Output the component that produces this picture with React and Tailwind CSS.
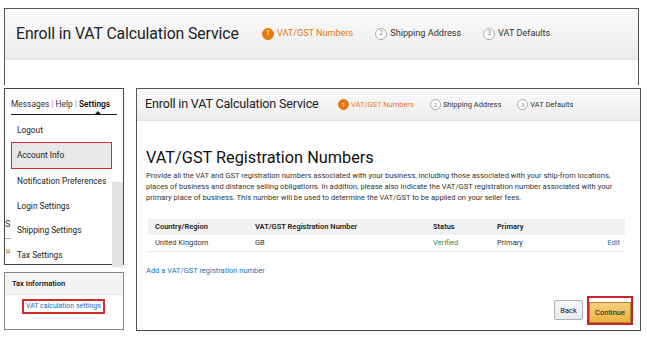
import React from 'react'

function Step({ n, label, active, size = 'lg' }) {
  const big = size === 'lg'
  return (
    <div className="flex items-center">
      <span
        className={
          (big ? 'w-[12px] h-[12px] text-[7px] mr-[3px] ' : 'w-[11px] h-[11px] text-[6px] mr-[2px] ') +
          (active
            ? 'bg-[#e47911] text-white border border-[#e47911] '
            : 'bg-white text-[#888] border border-[#aaa] ') +
          'rounded-full flex items-center justify-center leading-none'
        }
      >
        {n}
      </span>
      <span
        className={
          (big ? 'text-[9.1px] ' : 'text-[7.5px] ') +
          (active ? 'text-[#e47911] ' : 'text-[#333] ') +
          'whitespace-nowrap'
        }
      >
        {label}
      </span>
    </div>
  )
}

export default function App() {
  const sideItems = [
    'Logout',
    'Account Info',
    'Notification Preferences',
    'Login Settings',
    'Shipping Settings',
    'Tax Settings',
  ]

  return (
    <div className="w-[647px] h-[338px] bg-white overflow-hidden text-[#111]" style={{ fontFamily: 'Roboto, "Open Sans", sans-serif' }}>
      {/* Top banner */}
      <div className="mt-[8px] ml-[4px] w-[635px] h-[77px] border-x border-t border-[#555]">
        <div className="h-[51px] bg-gradient-to-b from-[#fbfbfb] to-[#ececec] border-b border-[#e2e2e2] flex items-center pl-[11px]">
          <h1 className="text-[15.8px] tracking-[-0.1px] text-[#222] w-[246px] whitespace-nowrap">Enroll in VAT Calculation Service</h1>
          <div className="flex items-center gap-[22px]">
            <Step n="1" label="VAT/GST Numbers" active />
            <Step n="2" label="Shipping Address" />
            <Step n="3" label="VAT Defaults" />
          </div>
        </div>
      </div>

      <div className="flex mt-[3px] ml-[4px]">
        {/* Left column */}
        <div className="w-[120px] flex flex-col">
          <div className="h-[177px] border border-[#444] relative flex flex-col">
            <div className="pt-[9px] px-[6px]">
              <div className="text-[8.4px] text-[#333] whitespace-nowrap">
                Messages <span className="text-[#999]">|</span> Help <span className="text-[#999]">|</span>{' '}
                <span className="font-semibold text-[#111]">Settings</span>
              </div>
              <div className="relative mt-[3px] h-[1px] bg-[#222]">
                <span className="absolute left-[84px] top-[-3px] w-0 h-0 border-x-[3px] border-x-transparent border-b-[3px] border-b-[#222]" />
              </div>
            </div>
            <div className="flex flex-1">
              <div className="w-[6px] relative">
                <span className="absolute left-[0px] top-[105px] text-[9px] text-[#333] leading-none">S</span>
                <span className="absolute left-[0px] top-[123px] w-[6px] h-[1px] bg-[#aaa]" />
                <span className="absolute left-[1px] top-[133px] text-[7px] text-[#555] leading-none">u</span>
              </div>
              <ul className="w-[101px] pt-[3px] flex flex-col text-[8.3px] text-[#222]">
                {sideItems.map((it) =>
                  it === 'Account Info' ? (
                    <li key={it} className="h-[27px] flex items-center pl-[5px] bg-[#e8e8e8] border border-[#d62b2b]">
                      {it}
                    </li>
                  ) : (
                    <li key={it} className="h-[24.5px] flex items-center pl-[6px] whitespace-nowrap">
                      {it}
                    </li>
                  )
                )}
              </ul>
              <div className="flex-1 flex flex-col">
                <div className="h-[67px]" />
                <div className="flex-1 bg-[#e3e3e3]" />
              </div>
            </div>
          </div>

          <div className="mt-[7px] h-[58px] border border-[#888] flex flex-col">
            <div className="h-[22px] bg-[#f3f3f3] border-b border-[#e2e2e2] flex items-center pl-[7px] text-[7.5px] font-semibold text-[#222]">
              Tax Information
            </div>
            <div className="flex-1 flex items-start pt-[4px] pl-[17px]">
              <span className="border-2 border-[#d62b2b] px-[2px] py-[2px] text-[7px] text-[#1a6fb5] leading-none whitespace-nowrap">
                VAT calculation settings
              </span>
            </div>
          </div>
        </div>

        {/* Main panel */}
        <div className="ml-[12px] w-[505px] h-[243px] border border-[#555] border-b-[#444] flex flex-col">
          <div className="h-[32px] bg-gradient-to-b from-[#fbfbfb] to-[#ececec] border-b border-[#e2e2e2] flex items-center pl-[8px]">
            <h2 className="text-[12.6px] tracking-[-0.2px] text-[#222] w-[193px] whitespace-nowrap">Enroll in VAT Calculation Service</h2>
            <div className="flex items-center gap-[16px]">
              <Step n="1" label="VAT/GST Numbers" active size="sm" />
              <Step n="2" label="Shipping Address" size="sm" />
              <Step n="3" label="VAT Defaults" size="sm" />
            </div>
          </div>

          <div className="px-[9px] pt-[26px] flex flex-col flex-1">
            <h3 className="text-[16.3px] leading-[21px] text-[#111] whitespace-nowrap">VAT/GST Registration Numbers</h3>
            <p className="mt-[2px] text-[7.6px] leading-[11px] text-[#333] whitespace-nowrap">
              Provide all the VAT and GST registration numbers associated with your business, including those associated with your ship-from locations,
              <br />
              places of business and distance selling obligations. In addition, please also indicate the VAT/GST registration number associated with your
              <br />
              primary place of business. This number will be used to determine the VAT/GST to be applied on your seller fees.
            </p>

            <div className="mt-[16px] ml-[2px] w-[477px] text-[7.5px]">
              <div className="h-[16px] bg-[#f1f1f1] flex items-center font-semibold text-[#222]">
                <span className="pl-[7px] w-[107px]">Country/Region</span>
                <span className="w-[178px]">VAT/GST Registration Number</span>
                <span className="w-[64px]">Status</span>
                <span>Primary</span>
              </div>
              <div className="h-[17px] border-b border-[#e6e6e6] flex items-center text-[#333]">
                <span className="pl-[7px] w-[107px]">United Kingdom</span>
                <span className="w-[178px]">GB</span>
                <span className="w-[64px] text-[#2e8b57]">Verified</span>
                <span className="flex-1">Primary</span>
                <span className="pr-[5px] text-[#1a6fb5]">Edit</span>
              </div>
            </div>

            <div className="mt-[13px] text-[7.5px] text-[#1a6fb5]">Add a VAT/GST registration number</div>

            <div className="mt-auto mb-[5px] -mr-[2px] flex justify-end items-center gap-[4px]">
              <button className="h-[20px] w-[29px] text-[7.5px] text-[#111] bg-gradient-to-b from-[#f7f8fa] to-[#e7e9ec] border border-[#adb1b8] rounded-[2px]">
                Back
              </button>
              <div className="border-[2.5px] border-[#c9252c]">
                <button className="h-[21px] w-[42px] text-[7.5px] text-[#111] bg-gradient-to-b from-[#f7cf7f] to-[#eeb23a] border border-[#a88734]">
                  Continue
                </button>
              </div>
            </div>
          </div>
        </div>
      </div>
    </div>
  )
}
